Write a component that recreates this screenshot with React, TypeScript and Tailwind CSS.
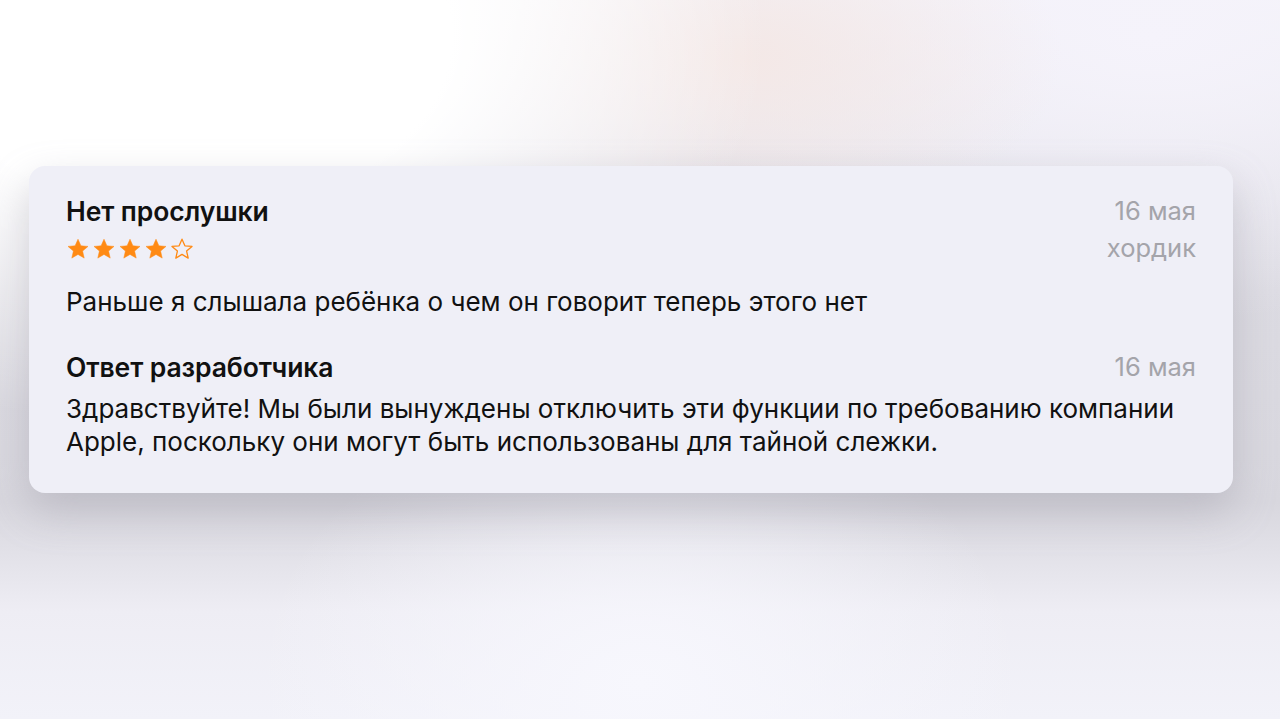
import React from 'react';

const font = { fontFamily: 'Inter, "Noto Sans", sans-serif' };

function Star({ filled }: { filled: boolean }) {
  return (
    <svg width="24" height="24" viewBox="0 0 24 24" className="shrink-0">
      <path
        d="M12 2.2l2.9 6.6 7.1.6-5.4 4.7 1.6 7-6.2-3.7-6.2 3.7 1.6-7L2 9.4l7.1-.6z"
        fill={filled ? '#ff8a14' : 'none'}
        stroke="#ff8a14"
        strokeWidth={filled ? 0.5 : 1.3}
        strokeLinejoin="round"
      />
    </svg>
  );
}

export default function App() {
  return (
    <div
      style={font}
      className="h-[719px] w-full overflow-hidden bg-[#e9e8ef] bg-[radial-gradient(ellipse_45%_55%_at_15%_5%,#ffffff_0%,#ffffff_45%,transparent_100%),radial-gradient(ellipse_25%_25%_at_58%_8%,#f4e8e6_0%,transparent_100%),radial-gradient(ellipse_40%_40%_at_90%_5%,#f5f3fb_0%,transparent_100%),radial-gradient(ellipse_30%_40%_at_50%_95%,#f7f7fd_0%,transparent_100%),linear-gradient(180deg,#f3f2f8_0%,#e6e5ec_22%,#dcdbe2_40%,#d8d7de_70%,#eeedf4_85%,#f2f2f9_100%)] pt-[166px] pl-[29px] pr-[47px]"
    >
      <div className="h-[327px] rounded-[16px] bg-[#efeff7] px-[37px] pt-[28px] shadow-[0_18px_40px_rgba(150,148,160,0.4)]">
        <div className="flex justify-between">
          <div>
            <div className="text-[26.5px] leading-[34px] font-semibold tracking-[-0.1px] text-[#111]">Нет прослушки</div>
            <div className="mt-[9px] flex gap-[2px]">
              <Star filled />
              <Star filled />
              <Star filled />
              <Star filled />
              <Star filled={false} />
            </div>
          </div>
          <div className="text-right text-[25.5px] text-[#a4a4aa]">
            <div className="leading-[34px]">16 мая</div>
            <div className="leading-[39px]">хордик</div>
          </div>
        </div>
        <p className="mt-[18px] text-[26px] leading-[34px] text-[#111]">
          Раньше я слышала ребёнка о чем он говорит теперь этого нет
        </p>
        <div className="mt-[31px] flex justify-between">
          <div className="text-[26.5px] leading-[34px] font-semibold tracking-[-0.1px] text-[#111]">Ответ разработчика</div>
          <div className="text-[25.5px] leading-[34px] text-[#a4a4aa]">16 мая</div>
        </div>
        <p className="mt-[8px] text-[26px] leading-[33px] text-[#111]">
          Здравствуйте! Мы были вынуждены отключить эти функции по требованию компании
          <br />
          Apple, поскольку они могут быть использованы для тайной слежки.
        </p>
      </div>
    </div>
  );
}
